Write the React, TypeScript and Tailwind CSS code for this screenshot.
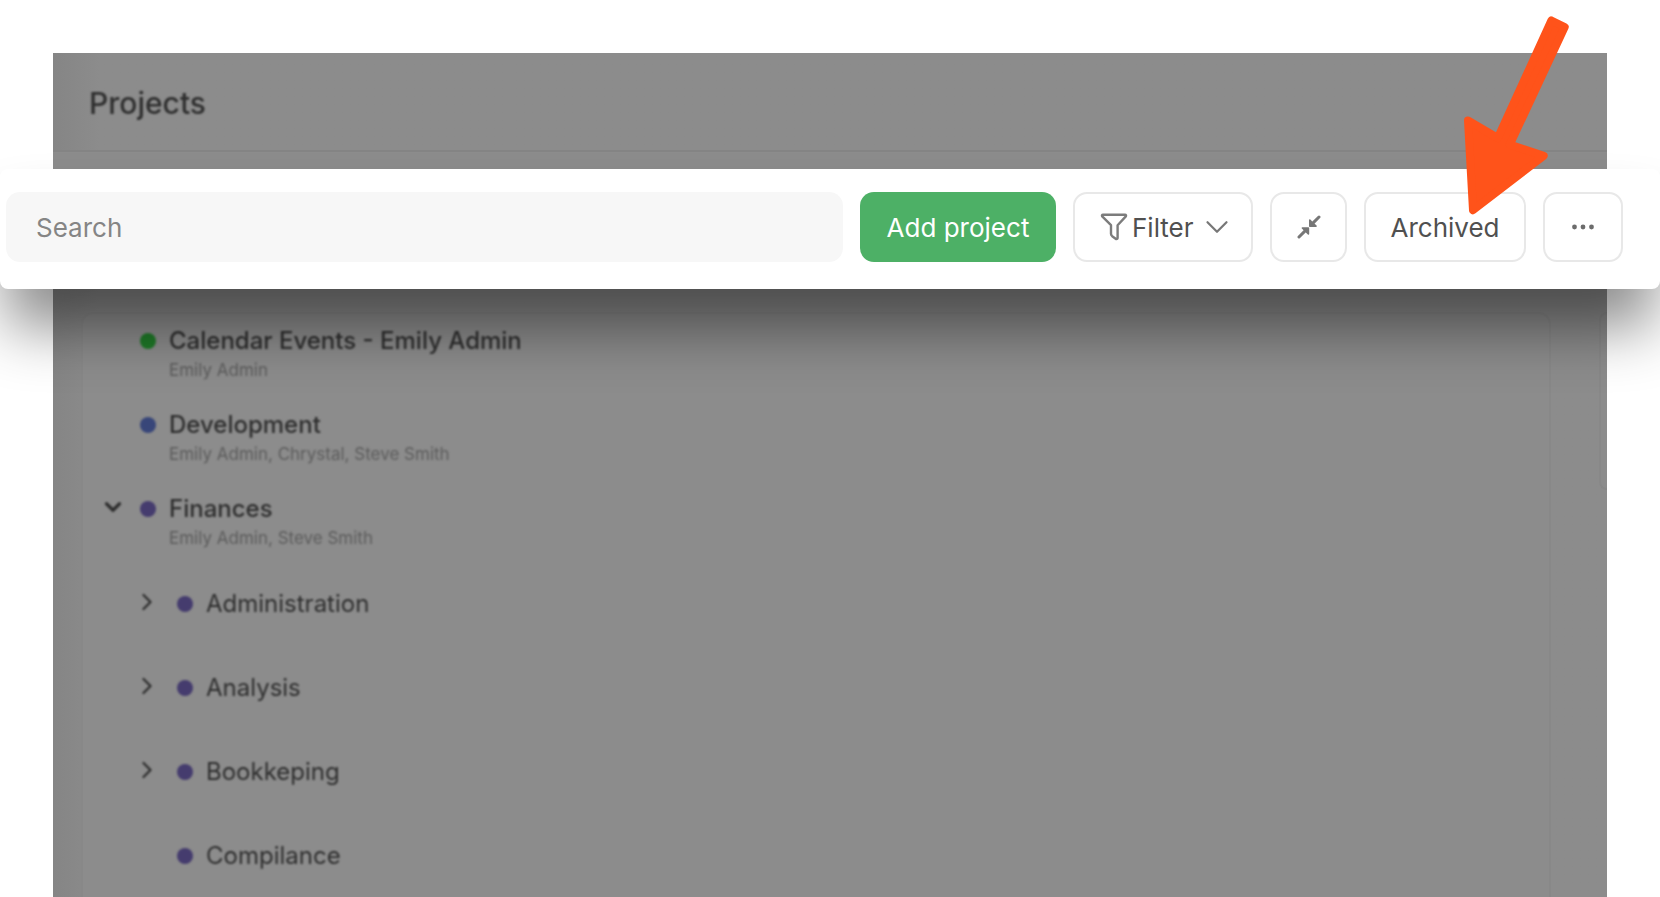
import React from "react";
import { ChevronDown, ChevronRight } from "lucide-react";
import clsx from "clsx";

interface Project {
  name: string;
  members?: string;
  color: string;
  level: number;
  state?: "open" | "closed";
}

const projects: Project[] = [
  { name: "Calendar Events - Emily Admin", members: "Emily Admin", color: "bg-[#1f7a28]", level: 0 },
  { name: "Development", members: "Emily Admin, Chrystal, Steve Smith", color: "bg-[#384679]", level: 0 },
  { name: "Finances", members: "Emily Admin, Steve Smith", color: "bg-[#453c6e]", level: 0, state: "open" },
];

const subProjects: Project[] = [
  { name: "Administration", color: "bg-[#453c6e]", level: 1, state: "closed" },
  { name: "Analysis", color: "bg-[#453c6e]", level: 1, state: "closed" },
  { name: "Bookkeping", color: "bg-[#453c6e]", level: 1, state: "closed" },
  { name: "Compilance", color: "bg-[#453c6e]", level: 1 },
];

const FunnelIcon = () => (
  <svg viewBox="0 0 28 28" className="size-7 shrink-0" fill="none" stroke="#7c7c7c" strokeWidth="2.4" strokeLinejoin="round" aria-hidden="true">
    <path d="M3 1.8H25Q26.6 1.8 25.8 3.4L17.6 12.2V24.8Q17.6 26.4 16 26L12.2 23.2Q11 22.2 11 20.8V12.2L2.2 3.4Q1.4 1.8 3 1.8Z" />
  </svg>
);

const CollapseIcon = () => (
  <svg viewBox="0 0 24 24" className="size-6" aria-hidden="true">
    <path d="M2 22L7.6 16.4M22 2L16.4 7.6" stroke="#777" strokeWidth="3" strokeLinecap="round" />
    <path d="M5.4 13H11.4V19L8.4 16ZM12.8 5V11.2H19L15.8 8.2Z" fill="#777" stroke="#777" strokeWidth="1.6" strokeLinejoin="round" />
  </svg>
);

const DotsIcon = () => (
  <svg viewBox="0 0 24 6" className="h-[6px] w-6" fill="#6c6c6c" aria-hidden="true">
    <circle cx="3.5" cy="3" r="2.4" />
    <circle cx="12" cy="3" r="2.4" />
    <circle cx="20.5" cy="3" r="2.4" />
  </svg>
);

const PointerArrow = () => (
  <svg
    viewBox="0 0 110 204"
    className="pointer-events-none absolute -top-[179px] -right-[46px] h-[204px] w-[110px]"
    fill="#ff531a"
    stroke="#ff531a"
    strokeWidth="8"
    strokeLinejoin="round"
    aria-hidden="true"
  >
    <path d="M89.4 7.5L102.7 14L47.8 131.6L81.7 142.8L11 197.2L6 107.5L35.8 125Z" />
  </svg>
);

const ToolbarButton: React.FC<React.ComponentProps<"button">> = ({ className, ...props }) => (
  <button
    type="button"
    className={clsx(
      "flex h-[70px] shrink-0 items-center rounded-[14px] border-2 border-[#e8e8e8] bg-white text-[26px] text-[#505050]",
      className
    )}
    {...props}
  />
);

const ProjectRow: React.FC<{ project: Project }> = ({ project }) => {
  const { name, members, color, level, state } = project;

  return (
    <li className={clsx("flex h-[84px] items-start", level > 0 && "pl-[37px]")}>
      <div className={clsx("flex h-8 w-[57px] shrink-0 items-center", level > 0 ? "pl-[13px]" : "pl-[17px]")}>
        {state && (
          <button type="button" aria-label={`Toggle ${name}`} className="-mt-1 text-[#2e2e2e]">
            {state === "open" ? (
              <ChevronDown className="size-[26px]" strokeWidth={3} />
            ) : (
              <ChevronRight className="size-7" strokeWidth={2} />
            )}
          </button>
        )}
      </div>
      <span className={clsx("mt-2 size-4 shrink-0 rounded-full", color)} />
      <div className="ml-[13px]">
        <div className={clsx("text-2xl leading-8 text-[#2e2e2e]", level === 0 && "font-medium")}>
          {name}
        </div>
        {members && <div className="text-[17px] leading-[26px] text-[#5c5c5c]">{members}</div>}
      </div>
    </li>
  );
};

export default function App() {
  return (
    <div className="flex h-screen flex-col overflow-hidden bg-white px-[53px] pt-[53px] font-['Inter',sans-serif]">
      <main className="flex min-h-0 flex-1 flex-col bg-[#8c8c8c]">
        <header className="h-[99px] shrink-0 border-b-2 border-[#848484] bg-linear-to-r from-[#858585] to-[#8c8c8c] to-3% pt-7 pl-9">
          <h1 className="text-[30px] leading-[44px] font-medium text-[#2e2e2e] blur-[1px]">Projects</h1>
        </header>

        <div className="relative z-10 -mx-[53px] mt-[17px] flex h-[120px] shrink-0 items-center gap-[17px] rounded-lg bg-white pr-[37px] pb-1 pl-[6px] shadow-[0_44px_60px_-6px_rgba(0,0,0,0.46)]">
          <input
            type="search"
            aria-label="Search projects"
            placeholder="Search"
            className="h-[70px] min-w-0 flex-1 rounded-[14px] bg-[#f7f7f7] px-[30px] text-[26px] text-[#505050] outline-none placeholder:text-[#858585]"
          />
          <button type="button" className="h-[70px] w-[196px] shrink-0 rounded-[14px] bg-[#4db066] text-[26px] text-white">
            Add project
          </button>
          <ToolbarButton className="w-[180px] gap-1 pl-[25px]">
            <FunnelIcon />
            Filter
            <ChevronDown className="size-[38px] shrink-0 text-[#777]" strokeWidth={1.4} />
          </ToolbarButton>
          <ToolbarButton className="w-[77px] justify-center" aria-label="Collapse all">
            <CollapseIcon />
          </ToolbarButton>
          <div className="relative shrink-0">
            <ToolbarButton className="w-[162px] justify-center">Archived</ToolbarButton>
            <PointerArrow />
          </div>
          <ToolbarButton className="w-[80px] justify-center" aria-label="More options">
            <DotsIcon />
          </ToolbarButton>
        </div>

        <div className="flex min-h-0 flex-1 justify-between overflow-hidden bg-linear-to-r from-[#858585] to-[#8c8c8c] to-3% pt-[23px] pl-7">
          <section className="mr-12 min-w-0 flex-1 rounded-t-xl border-2 border-b-0 border-[#888] bg-[#8c8c8c] pt-[11px]">
            <ul className="blur-[1px]">
              {projects.map((project) => (
                <ProjectRow key={project.name} project={project} />
              ))}
              <li className="pt-[11px]">
                <ul>
                  {subProjects.map((project) => (
                    <ProjectRow key={project.name} project={project} />
                  ))}
                </ul>
              </li>
            </ul>
          </section>
          <aside className="h-[178px] w-2 shrink-0 rounded-l-xl border-2 border-r-0 border-[#888] bg-[#8c8c8c]" />
        </div>
      </main>
    </div>
  );
}
